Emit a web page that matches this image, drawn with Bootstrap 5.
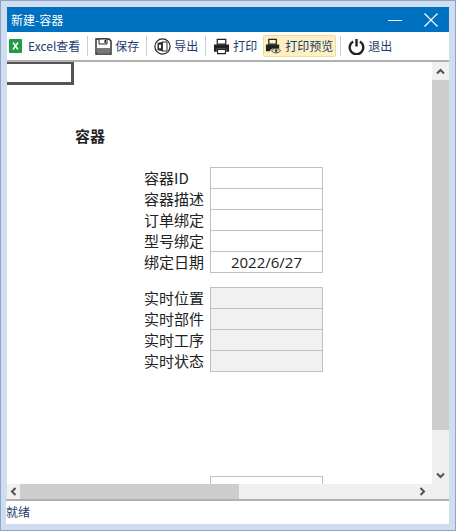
<!DOCTYPE html>
<html lang="zh">
<head>
<meta charset="UTF-8">
<title>新建-容器</title>
<link rel="stylesheet" href="https://cdn.jsdelivr.net/npm/bootstrap@5.3.0/dist/css/bootstrap.min.css">
<style>
html, body { margin: 0; height: 531px; overflow: hidden; }
body { background: #fff; font-family: "Noto Sans CJK SC", "Liberation Sans", sans-serif; }
.win-frame { width: 456px; height: 531px; background: #cfddf0; border: 1px solid #8ea6c8; padding: 6px; }
.win-title { height: 25px; background: #0070c0; color: #fff; font-size: 12px; padding-left: 4px; }
.win-btn { width: 36px; height: 25px; }
.tool-bar { height: 30px; background: #fff; border-bottom: 2px solid #b0b0b0; padding-left: 2px; color: #1d3c6e; font-size: 12px; }
.tool-item { height: 22px; gap: 3px; white-space: nowrap; }
.tool-item.wide { gap: 6px; }
.tool-item.hot { background: #fdf0c4; border: 1px solid #f2dc94; border-radius: 2px; padding: 0 2px 0 1px; margin-left: 6px; }
.tool-sep { width: 1px; height: 20px; background: #c4ced8; margin: 0 7px; }
.tool-sep.after-hot { margin-left: 4px; }
.sheet-row { height: 422px; }
.sheet { width: 425px; background: #fff; overflow: hidden; color: #222; }
.cur-cell { width: 67px; height: 23px; background: #fff; border: solid #555; border-width: 2px 3px 3px 0; }
.sheet-head { margin: 41px 0 0 68px; height: 20px; font-size: 15px; font-weight: 700; line-height: 20px; }
.field-grid { display: grid; grid-template-columns: 198px 113px; grid-auto-rows: 21px; font-size: 15px; line-height: 21px; }
.field-grid.first { margin-top: 21px; }
.field-grid.second { margin-top: 15px; }
.field-lbl { padding-left: 137px; white-space: nowrap; }
.field-val { margin-left: 5px; width: 113px; height: 22px; border: 1px solid #c0c0c0; margin-bottom: -1px; text-align: center; line-height: 20px; font-family: "Open Sans", "Noto Sans CJK SC", sans-serif; }
.field-val.ro { background: #f1f1f1; }
.field-cell-tail { margin: 105px 0 0 203px; width: 113px; height: 30px; border: 1px solid #c0c0c0; }
.v-bar { width: 17px; background: #f0f0f0; }
.v-btn { height: 18px; }
.v-thumb { height: 350px; background: #cdcdcd; }
.h-bar { height: 15px; background: #f0f0f0; }
.h-btn { width: 13px; }
.h-thumb { width: 219px; background: #cdcdcd; }
.h-rest { padding-right: 23px; }
.status-bar { height: 25px; background: #fff; border-top: 2px solid #b0b0b0; font-size: 12px; line-height: 22px; color: #1d3c6e; margin-left: -1px; }
</style>
</head>
<body>
<div class="win-frame d-flex flex-column">
  <div class="win-title d-flex align-items-center justify-content-between">
    <span>新建-容器</span>
    <div class="d-flex">
      <div class="win-btn d-flex align-items-center justify-content-center">
        <svg width="16" height="16" viewBox="0 0 16 16"><path d="M1 8.500h14" stroke="#fff" stroke-width="1"/></svg>
      </div>
      <div class="win-btn d-flex align-items-center justify-content-center">
        <svg width="16" height="16" viewBox="0 0 16 16"><path d="M1.500 1.500l13 13M14.500 1.500l-13 13" stroke="#fff" stroke-width="1.200"/></svg>
      </div>
    </div>
  </div>

  <div class="tool-bar d-flex align-items-center">
    <div class="tool-item wide d-flex align-items-center">
      <svg width="13" height="14" viewBox="0 0 13 14"><rect width="13" height="14" rx="1" fill="#1e9b45"/><path d="M4 3.500l5 7M9 3.500l-5 7" stroke="#fff" stroke-width="1.500"/></svg>
      <span>Excel查看</span>
    </div>
    <div class="tool-sep"></div>
    <div class="tool-item d-flex align-items-center">
      <svg width="17" height="17" viewBox="0 0 17 17"><path d="M1 1h13l2 2v13H1z" fill="#fff" stroke="#222" stroke-width="1.400"/><path d="M4 1h8v5H4z" fill="#fff" stroke="#222"/><path d="M9.500 2h1.500v3H9.500z" fill="#222"/><path d="M2 10h13v5.500H2z" fill="#777"/></svg>
      <span>保存</span>
    </div>
    <div class="tool-sep"></div>
    <div class="tool-item d-flex align-items-center">
      <svg width="17" height="17" viewBox="0 0 17 17"><circle cx="8.500" cy="8.500" r="7.600" fill="#fff" stroke="#222" stroke-width="1.200"/><path d="M8 4h5v9H8z" fill="#fff" stroke="#333"/><path d="M3.500 4.800l5.500-1v9.400l-5.500-1z" fill="#333"/><path d="M5 6.700h2v3.600H5z" fill="#fff"/></svg>
      <span>导出</span>
    </div>
    <div class="tool-sep"></div>
    <div class="tool-item d-flex align-items-center">
      <svg width="17" height="17" viewBox="0 0 18 17"><path d="M4.500 1h9v5h-9z" fill="#fff" stroke="#222" stroke-width="1.300"/><path d="M1 6.500h16v7.500h-3v-3H4v3H1z" fill="#222"/><path d="M4.800 11.500h8.400v4.500H4.800z" fill="#fff" stroke="#222" stroke-width="1.200"/></svg>
      <span>打印</span>
    </div>
    <div class="tool-item hot d-flex align-items-center">
      <svg width="17" height="17" viewBox="0 0 18 17"><path d="M4 1h8v5H4z" fill="none" stroke="#222" stroke-width="1.300"/><path d="M1 6.500h14v4H9c-2 0-3 1-4 3H1z" fill="#222"/><path d="M7 13c2-3 7-3 9.500 0-2.500 3-7.500 3-9.500 0z" fill="none" stroke="#333"/><circle cx="11.800" cy="13" r="1.300" fill="#333"/></svg>
      <span>打印预览</span>
    </div>
    <div class="tool-sep after-hot"></div>
    <div class="tool-item d-flex align-items-center">
      <svg width="17" height="17" viewBox="0 0 17 17"><path d="M5.200 3.500a6.800 6.800 0 1 0 6.600 0" fill="none" stroke="#222" stroke-width="2.400"/><path d="M8.500 1v7.500" stroke="#222" stroke-width="2.400"/></svg>
      <span>退出</span>
    </div>
  </div>

  <div class="sheet-row d-flex">
    <div class="sheet">
      <div class="cur-cell"></div>
      <div class="sheet-head">容器</div>
      <div class="field-grid first">
        <div class="field-lbl">容器ID</div><div class="field-val"></div>
        <div class="field-lbl">容器描述</div><div class="field-val"></div>
        <div class="field-lbl">订单绑定</div><div class="field-val"></div>
        <div class="field-lbl">型号绑定</div><div class="field-val"></div>
        <div class="field-lbl">绑定日期</div><div class="field-val">2022/6/27</div>
      </div>
      <div class="field-grid second">
        <div class="field-lbl">实时位置</div><div class="field-val ro"></div>
        <div class="field-lbl">实时部件</div><div class="field-val ro"></div>
        <div class="field-lbl">实时工序</div><div class="field-val ro"></div>
        <div class="field-lbl">实时状态</div><div class="field-val ro"></div>
      </div>
      <div class="field-cell-tail"></div>
    </div>
    <div class="v-bar d-flex flex-column justify-content-between">
      <div>
        <div class="v-btn d-flex align-items-center justify-content-center">
          <svg width="9" height="7" viewBox="0 0 9 7"><path d="M1 5.500l3.500-3.500 3.500 3.500" fill="none" stroke="#505050" stroke-width="2"/></svg>
        </div>
        <div class="v-thumb"></div>
      </div>
      <div class="v-btn d-flex align-items-center justify-content-center">
        <svg width="9" height="7" viewBox="0 0 9 7"><path d="M1 1.500l3.500 3.500 3.500-3.500" fill="none" stroke="#505050" stroke-width="2"/></svg>
      </div>
    </div>
  </div>

  <div class="h-bar d-flex">
    <div class="h-btn d-flex align-items-center justify-content-center">
      <svg width="7" height="9" viewBox="0 0 7 9"><path d="M5.500 1l-3.500 3.500 3.500 3.500" fill="none" stroke="#505050" stroke-width="2"/></svg>
    </div>
    <div class="h-thumb"></div>
    <div class="h-rest flex-grow-1 d-flex align-items-center justify-content-end">
      <svg width="7" height="9" viewBox="0 0 7 9"><path d="M1.500 1l3.500 3.500-3.500 3.500" fill="none" stroke="#505050" stroke-width="2"/></svg>
    </div>
  </div>

  <div class="status-bar">就绪</div>
</div>
<script src="https://cdn.jsdelivr.net/npm/bootstrap@5.3.0/dist/js/bootstrap.bundle.min.js"></script>
</body>
</html>
